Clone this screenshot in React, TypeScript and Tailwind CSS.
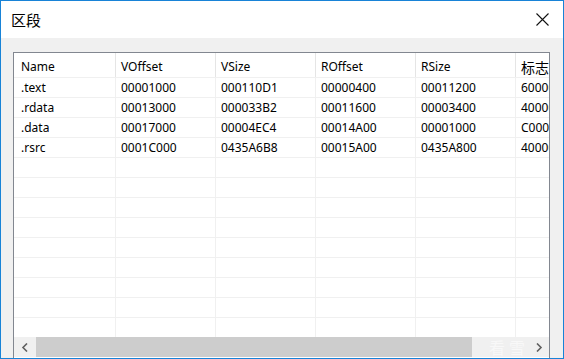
import React from "react";

const cols = ["Name", "VOffset", "VSize", "ROffset", "RSize", "标志"];

const rows: string[][] = [
  [".text", "00001000", "000110D1", "00000400", "00011200", "60000020"],
  [".rdata", "00013000", "000033B2", "00011600", "00003400", "40000040"],
  [".data", "00017000", "00004EC4", "00014A00", "00001000", "C0000040"],
  [".rsrc", "0001C000", "0435A6B8", "00015A00", "0435A800", "40000040"],
];

const EMPTY_ROWS = 9;

// first column is 2px wider so the separators land on 115, 215, ...
const colCls = (i: number) =>
  i === 0 ? "w-[102px] pl-[7px]" : "w-[100px] pl-[5px]";

const Chevron: React.FC<{ dir: "left" | "right" }> = ({ dir }) => (
  <svg width="8" height="9" viewBox="0 0 8 9" className="shrink-0">
    <path
      d={dir === "left" ? "M6 0.5 L2 4.5 L6 8.5" : "M2 0.5 L6 4.5 L2 8.5"}
      fill="none"
      stroke="#606060"
      strokeWidth="1.6"
    />
  </svg>
);

export default function App() {
  return (
    <div
      className="w-[564px] h-[359px] border border-[#1883d7] bg-[#f0f0f0] flex flex-col overflow-hidden text-black"
      style={{ fontFamily: '"Segoe UI", "Noto Sans", "Noto Sans CJK SC", sans-serif' }}
    >
      {/* Title bar */}
      <div className="h-[37px] bg-white flex items-center justify-between pl-[10px] pr-[14px] shrink-0">
        <span className="text-[15px] leading-none" style={{ fontFamily: '"Noto Sans CJK SC", sans-serif' }}>
          区段
        </span>
        <svg width="13" height="13" viewBox="0 0 13 13">
          <path d="M0.5 0.5 L12.5 12.5 M12.5 0.5 L0.5 12.5" stroke="#111" strokeWidth="1.1" />
        </svg>
      </div>

      {/* Body */}
      <div className="flex-1 flex flex-col pl-[12px] pr-[13px] pt-[14px] pb-[14px]">
        <div className="flex-1 flex flex-col border border-[#828790] bg-white overflow-hidden">
          {/* Header */}
          <div className="h-[24px] flex shrink-0 overflow-hidden">
            {cols.map((c, i) => (
              <div
                key={c}
                className={`${colCls(i)} shrink-0 flex items-center pt-[4px] text-[12px] border-r border-[#e5e5e5] ${
                  i === 5 ? "text-[14px]" : ""
                }`}
              >
                {c}
              </div>
            ))}
          </div>

          {/* Rows */}
          <div className="flex-1 overflow-hidden">
            {[...rows, ...Array.from({ length: EMPTY_ROWS }, () => ["", "", "", "", "", ""])].map((r, ri) => (
              <div key={ri} className="h-[20px] flex border-t border-[#f0f0f0]">
                {r.map((v, ci) => (
                  <div
                    key={ci}
                    className={`${colCls(ci)} shrink-0 flex items-center text-[12px] border-r border-[#f0f0f0] overflow-hidden whitespace-nowrap`}
                  >
                    {v}
                  </div>
                ))}
              </div>
            ))}
          </div>

          {/* Horizontal scrollbar */}
          <div className="h-[20px] mb-px flex items-stretch bg-[#f0f0f0] shrink-0">
            <div className="w-[22px] flex items-center justify-center">
              <Chevron dir="left" />
            </div>
            <div className="w-[436px] bg-[#cdcdcd]" />
            <div className="flex-1 flex items-center justify-end pr-[6px]">
              <span
                className="text-[16px] text-[#f8f8f8] mr-[6px] tracking-[4px]"
                style={{ fontFamily: '"Noto Sans CJK SC", sans-serif' }}
              >
                看雪
              </span>
              <Chevron dir="right" />
            </div>
          </div>
        </div>
      </div>
    </div>
  );
}
